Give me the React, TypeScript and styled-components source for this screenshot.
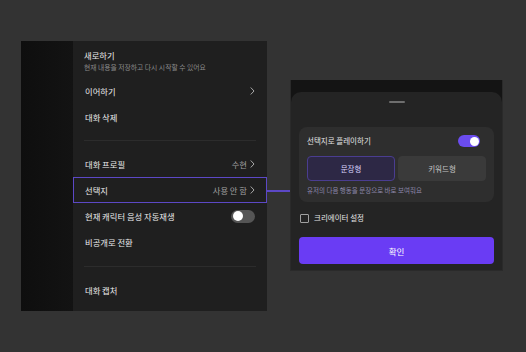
import styled, { createGlobalStyle } from "styled-components";

const GlobalStyle = createGlobalStyle`
  html, body {
    margin: 0;
    padding: 0;
    background: #333333;
  }
  body {
    font-family: "Noto Sans CJK KR", "Noto Sans", sans-serif;
    -webkit-font-smoothing: antialiased;
  }
`;

const PURPLE_LINE = "#5c48c6";

function Chevron({ color = "#a8a8a8" }: { color?: string }) {
  return (
    <svg width="5" height="8" viewBox="0 0 5 8" fill="none">
      <path d="M1 0.8L4 4L1 7.2" stroke={color} strokeWidth="1" strokeLinecap="round" strokeLinejoin="round" />
    </svg>
  );
}

function App() {
  return (
    <Page>
      <GlobalStyle />
      <MenuPanel>
        <Shade />
        <Menu>
          <TopItem>
            <Title>새로하기</Title>
            <Sub>현재 내용을 저장하고 다시 시작할 수 있어요</Sub>
          </TopItem>
          <Row>
            <Title>이어하기</Title>
            <Chevron />
          </Row>
          <Row>
            <Title>대화 삭제</Title>
          </Row>
          <Divider $top={10} $bottom={10} />
          <Row>
            <Title>대화 프로필</Title>
            <Value>
              수현 <Chevron />
            </Value>
          </Row>
          <Row $selected>
            <Title>선택지</Title>
            <Value>
              사용 안 함 <Chevron />
            </Value>
          </Row>
          <Row>
            <Title>현재 캐릭터 음성 자동재생</Title>
            <Toggle>
              <Knob />
            </Toggle>
          </Row>
          <Row>
            <Title>비공개로 전환</Title>
          </Row>
          <Divider $top={11} $bottom={10} />
          <Row>
            <Title>대화 캡처</Title>
          </Row>
        </Menu>
      </MenuPanel>
      <Connector />
      <Phone>
        <Sheet>
          <Handle />
          <Card>
            <CardHeader>
              <CardLabel>선택지로 플레이하기</CardLabel>
              <Toggle $on $small>
                <Knob $on $small />
              </Toggle>
            </CardHeader>
            <Segments>
              <Segment $active>문장형</Segment>
              <Segment>키워드형</Segment>
            </Segments>
            <Helper>유저의 다음 행동을 문장으로 바로 보여줘요</Helper>
          </Card>
          <CheckRow>
            <CheckBox />
            <CardLabel>크리에이터 설정</CardLabel>
          </CheckRow>
          <Confirm>확인</Confirm>
        </Sheet>
      </Phone>
    </Page>
  );
}

const Page = styled.div`
  width: 526px;
  height: 352px;
  box-sizing: border-box;
  padding: 41px 0 0 21px;
  display: flex;
  align-items: flex-start;
`;

const MenuPanel = styled.div`
  width: 246px;
  height: 270px;
  display: flex;
  background: #1f1f1f;
`;

const Shade = styled.div`
  width: 52px;
  background: linear-gradient(90deg, #0e0e0e 0%, #131313 100%);
`;

const Menu = styled.div`
  flex: 1;
  display: flex;
  flex-direction: column;
  padding-top: 8px;
`;

const TopItem = styled.div`
  display: flex;
  flex-direction: column;
  padding: 0 11px;
  margin-bottom: 5px;
`;

const Title = styled.span`
  font-size: 8.3px;
  line-height: 12px;
  color: #ececec;
`;

const Sub = styled.span`
  font-size: 6.8px;
  line-height: 12px;
  color: #8a8a8a;
`;

const Row = styled.div<{ $selected?: boolean }>`
  height: 26px;
  box-sizing: border-box;
  padding: 0 11px;
  display: flex;
  align-items: center;
  justify-content: space-between;
  border: 1.5px solid ${(p) => (p.$selected ? PURPLE_LINE : "transparent")};
`;

const Value = styled.span`
  display: flex;
  align-items: center;
  gap: 3px;
  font-size: 8.3px;
  line-height: 12px;
  color: #a0a0a0;
`;

const Divider = styled.div<{ $top: number; $bottom: number }>`
  height: 1px;
  background: #2c2c2c;
  margin: ${(p) => p.$top}px 11px ${(p) => p.$bottom}px;
`;

const Toggle = styled.div<{ $on?: boolean; $small?: boolean }>`
  width: ${(p) => (p.$small ? 22 : 24)}px;
  height: ${(p) => (p.$small ? 12 : 13)}px;
  border-radius: 7px;
  background: ${(p) => (p.$on ? "#6b4cf0" : "#555555")};
  display: flex;
  align-items: center;
  justify-content: ${(p) => (p.$on ? "flex-end" : "flex-start")};
  padding: 0 1.5px;
  box-sizing: border-box;
`;

const Knob = styled.div<{ $on?: boolean; $small?: boolean }>`
  width: ${(p) => (p.$small ? 9 : 10)}px;
  height: ${(p) => (p.$small ? 9 : 10)}px;
  border-radius: 50%;
  background: #ffffff;
`;

const Connector = styled.div`
  width: 23px;
  height: 1.5px;
  margin-top: 149px;
  background: ${PURPLE_LINE};
`;

const Phone = styled.div`
  width: 213px;
  height: 191px;
  margin-top: 39px;
  box-sizing: border-box;
  padding-top: 12px;
  background: #141414;
  border: 1px solid #2a2a2a;
  border-top: none;
  display: flex;
`;

const Sheet = styled.div`
  flex: 1;
  background: #242424;
  border-radius: 10px 10px 0 0;
  padding: 9px 8px 0;
  display: flex;
  flex-direction: column;
`;

const Handle = styled.div`
  align-self: center;
  width: 16px;
  height: 2px;
  border-radius: 1px;
  background: #6e6e6e;
  margin-bottom: 24px;
`;

const Card = styled.div`
  background: #2e2e2e;
  border-radius: 8px;
  padding: 8px 8px 7px;
  display: flex;
  flex-direction: column;
`;

const CardHeader = styled.div`
  display: flex;
  align-items: center;
  justify-content: space-between;
  padding-right: 6px;
  margin-bottom: 9px;
`;

const CardLabel = styled.span`
  font-size: 7.5px;
  line-height: 12px;
  color: #e4e4e4;
`;

const Segments = styled.div`
  display: grid;
  grid-template-columns: 1fr 1fr;
  gap: 3px;
`;

const Segment = styled.div<{ $active?: boolean }>`
  height: 25px;
  box-sizing: border-box;
  border-radius: 4px;
  display: flex;
  align-items: center;
  justify-content: center;
  font-size: 7.5px;
  color: ${(p) => (p.$active ? "#ddd6ff" : "#c4c4c4")};
  background: ${(p) => (p.$active ? "#2d2845" : "#3a3a3a")};
  border: 1px solid ${(p) => (p.$active ? "#4a3d90" : "#3a3a3a")};
`;

const Helper = styled.span`
  font-size: 6.5px;
  line-height: 10px;
  margin-top: 4px;
  color: #8d87aa;
`;

const CheckRow = styled.div`
  display: flex;
  align-items: center;
  gap: 5px;
  margin: 10px 0 0 1px;
`;

const CheckBox = styled.div`
  width: 7px;
  height: 7px;
  border: 1px solid #a0a0a0;
  border-radius: 1px;
`;

const Confirm = styled.button`
  margin-top: 13px;
  height: 27px;
  border: none;
  border-radius: 4px;
  background: #6a3cf4;
  color: #ffffff;
  font-family: inherit;
  font-size: 8.5px;
  padding: 0;
`;

export default App;
